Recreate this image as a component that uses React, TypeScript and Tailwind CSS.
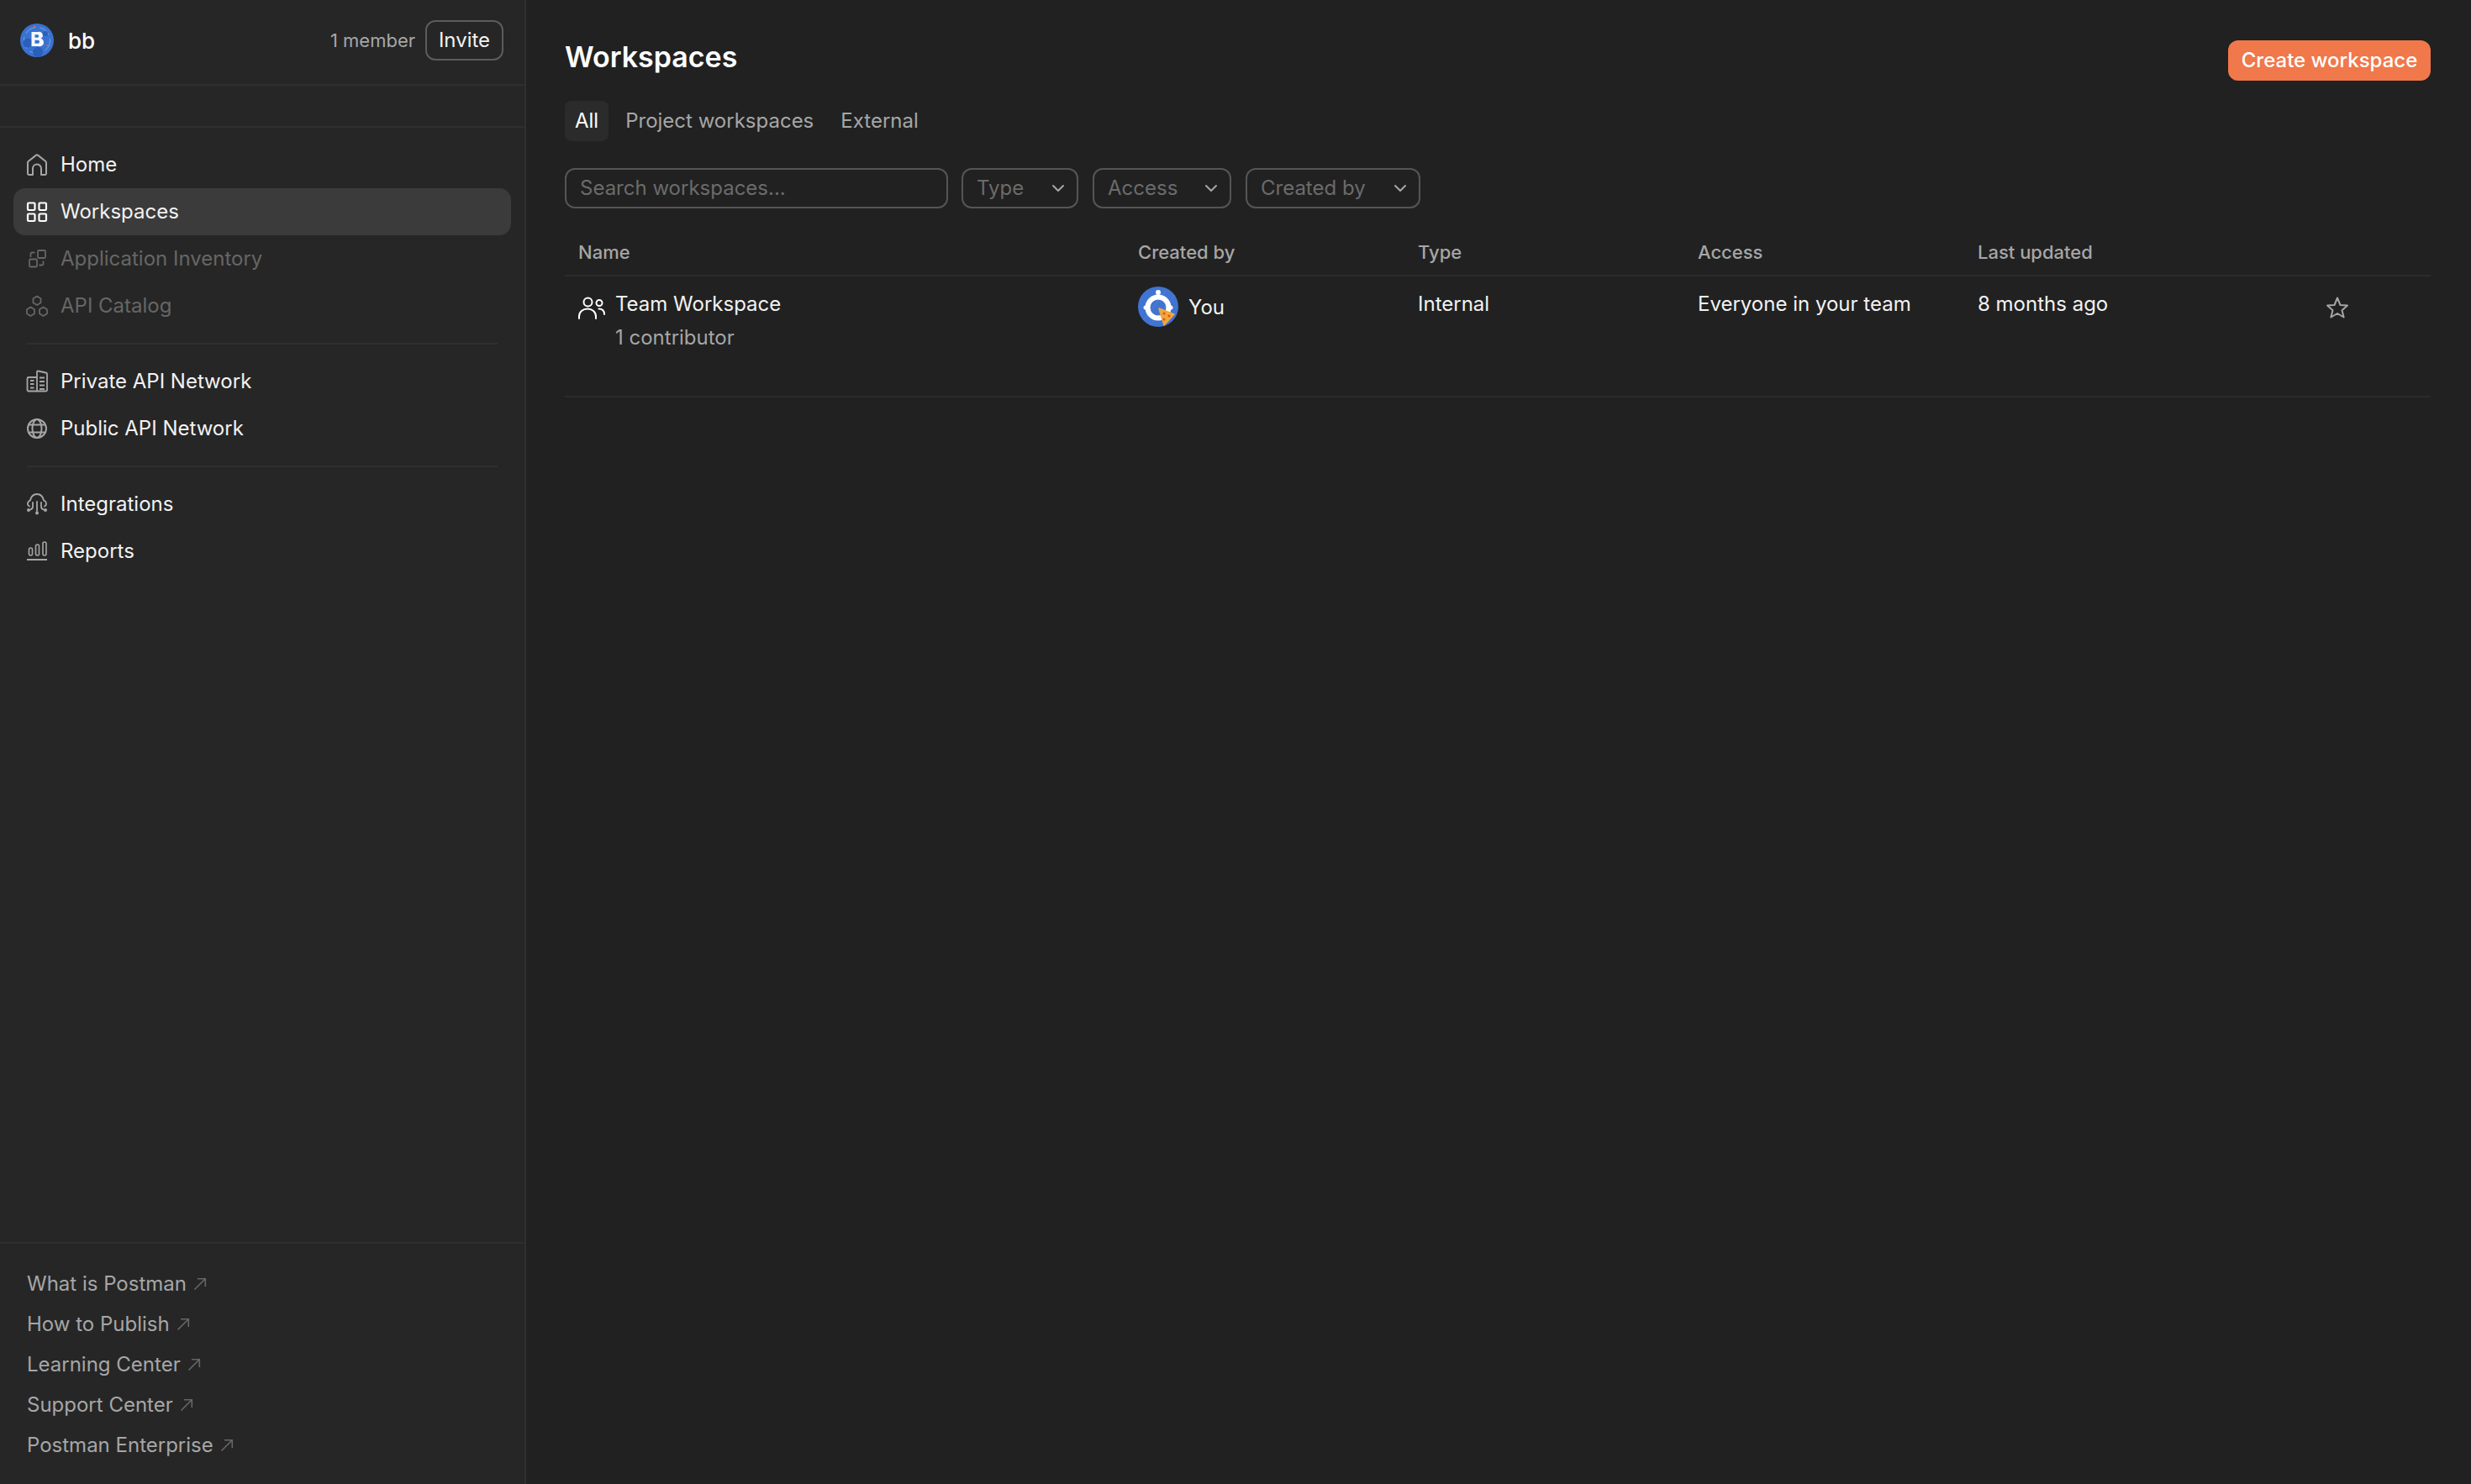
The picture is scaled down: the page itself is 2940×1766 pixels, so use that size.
import { ChevronDown } from 'lucide-react';

const font = { fontFamily: 'Inter, "Liberation Sans", sans-serif' };

const HomeIcon = () => (
  <svg viewBox="0 0 32 32" className="h-8 w-8" fill="none" stroke="currentColor" strokeWidth="2" strokeLinejoin="round">
    <path d="M5 26.5V13.5a2 2 0 0 1 .7-1.5L15 4.6a1.6 1.6 0 0 1 2 0L26.3 12a2 2 0 0 1 .7 1.5v13a1.5 1.5 0 0 1-1.5 1.5H21v-7.5a5 5 0 0 0-10 0V28H6.5A1.5 1.5 0 0 1 5 26.5Z" />
  </svg>
);

const GridIcon = () => (
  <svg viewBox="0 0 32 32" className="h-8 w-8" fill="none" stroke="currentColor" strokeWidth="2.2">
    <rect x="5" y="5.5" width="8.5" height="8.5" rx="1.2" />
    <rect x="18.5" y="5.5" width="8.5" height="8.5" rx="1.2" />
    <rect x="5" y="18.5" width="8.5" height="8.5" rx="1.2" />
    <rect x="18.5" y="18.5" width="8.5" height="8.5" rx="1.2" />
  </svg>
);

const InventoryIcon = () => (
  <svg viewBox="0 0 32 32" className="h-8 w-8" fill="none" stroke="currentColor" strokeWidth="1.8">
    <rect x="17" y="6" width="9" height="9" rx="1.2" />
    <rect x="7" y="16.500" width="9" height="9" rx="1.2" />
    <path d="M8.500 14V10a1.500 1.500 0 0 1 1.500-1.500h3.500" />
    <path d="M23.500 18.500v3.500a1.500 1.500 0 0 1-1.500 1.500h-3.500" />
  </svg>
);

const CatalogIcon = () => (
  <svg viewBox="0 0 32 32" className="h-8 w-8" fill="none" stroke="currentColor" strokeWidth="1.8" strokeLinejoin="round">
    <path d="M16 4.500 20.500 7.200v5.100L16 15 11.500 12.300V7.200Z" />
    <path d="M8.500 17.500 13 20.200v5.100L8.500 28 4 25.300v-5.100Z" />
    <path d="M23.500 17.500 28 20.200v5.100L23.500 28 19 25.300v-5.100Z" />
  </svg>
);

const BuildingIcon = () => (
  <svg viewBox="0 0 32 32" className="h-8 w-8" fill="none" stroke="currentColor" strokeWidth="1.8" strokeLinejoin="round">
    <path d="M16 27.500V4.500a1 1 0 0 1 1.200-1L26.500 5.500a1.800 1.800 0 0 1 1.500 1.800V26a1.500 1.500 0 0 1-1.500 1.500H6A1.500 1.500 0 0 1 4.500 26V12.500A1.500 1.500 0 0 1 6 11H16" />
    <path d="M8 15h4.500M8 19h4.500M8 23.500h4.500M19 11.500h6M19 16h6M19 20.500h6M19 25h6" />
  </svg>
);

const GlobeIcon = () => (
  <svg viewBox="0 0 32 32" className="h-8 w-8" fill="none" stroke="currentColor" strokeWidth="2">
    <circle cx="16" cy="16" r="11" />
    <ellipse cx="16" cy="16" rx="5.500" ry="11" />
    <path d="M6.500 11.500h19M6.500 20.500h19" />
  </svg>
);

const IntegrationsIcon = () => (
  <svg viewBox="0 0 32 32" className="h-8 w-8" fill="none" stroke="currentColor" strokeWidth="1.8" strokeLinecap="round">
    <path d="M7 18.500C4 17 4.500 12.500 8 11.500 9 7 12 4 16 4s7 3 8 7.500c3.500 1 4 5.500 1 7" />
    <path d="M16 13v11M11 14v5c0 2-1.500 3-3 3.500M21 14v5c0 2 1.500 3 3 3.500" />
    <circle cx="6" cy="23" r="2" fill="currentColor" stroke="none" />
    <circle cx="16" cy="26.500" r="2" fill="currentColor" stroke="none" />
    <circle cx="26" cy="23" r="2" fill="currentColor" stroke="none" />
  </svg>
);

const ReportsIcon = () => (
  <svg viewBox="0 0 32 32" className="h-8 w-8" fill="none" stroke="currentColor" strokeWidth="1.6">
    <rect x="6.500" y="12" width="4" height="9" rx="2" />
    <rect x="14.500" y="8" width="4" height="13" rx="2" />
    <rect x="23" y="5" width="4" height="16" rx="2" />
    <path d="M4 26h24" strokeWidth="2" />
  </svg>
);

const TeamAvatar = () => (
  <svg viewBox="0 0 40 40" className="h-10 w-10">
    <circle cx="20" cy="20" r="20" fill="#3a72d0" />
    <circle cx="20" cy="20" r="15.500" fill="none" stroke="#7ea6e8" strokeWidth="1" strokeDasharray="14 5" />
    <circle cx="9" cy="23" r="5.500" fill="#2a5fba" />
    <circle cx="21" cy="34" r="6" fill="#2a5fba" />
    <circle cx="30" cy="12" r="3" fill="#2a5fba" />
    <circle cx="17" cy="3.500" r="1" fill="#e0634a" />
    <circle cx="32" cy="26" r="1" fill="#e0634a" />
    <path d="M13.500 10H21.500A4.200 4.200 0 0 1 24.500 17.800 4.600 4.600 0 0 1 22 27H13.500Z M17.500 13.200V16.800H20.500A1.800 1.800 0 0 0 20.500 13.200Z M17.500 19.800V23.800H21A2 2 0 0 0 21 19.800Z" fill="#f4f7fd" fillRule="evenodd" />
  </svg>
);

const UserAvatar = () => (
  <svg viewBox="0 0 48 48" className="h-12 w-12 shrink-0">
    <circle cx="24" cy="24" r="24" fill="#3f74d2" />
    <path d="M6 40 34 4M14 46 44 10" stroke="#7f78c8" strokeWidth="1" opacity="0.7" />
    <circle cx="24" cy="25" r="12.500" fill="none" stroke="#fff" strokeWidth="6" />
    <circle cx="24" cy="7" r="3" fill="#fff" />
    <path d="M24 7v6" stroke="#fff" strokeWidth="2" />
    <circle cx="9" cy="25" r="2.500" fill="#fff" />
    <circle cx="39" cy="25" r="2.500" fill="#fff" />
    <path d="M25 26 43 33 31 46Z" fill="#f2a63c" stroke="#f2a63c" strokeWidth="1.500" strokeLinejoin="round" />
    <circle cx="31" cy="32" r="1.500" fill="#d9532c" />
    <circle cx="37" cy="35" r="1.500" fill="#d9532c" />
    <circle cx="31" cy="39" r="1.500" fill="#d9532c" />
  </svg>
);

const PeopleIcon = () => (
  <svg viewBox="0 0 32 28" className="h-7 w-8" fill="none" stroke="currentColor" strokeWidth="2" strokeLinecap="round">
    <circle cx="11.500" cy="7.500" r="5" />
    <circle cx="25" cy="8.500" r="3.500" />
    <path d="M1 27v-2.500C1 19 5.500 15.500 11 15.500s10 3.500 10 9V27" />
    <path d="M24.500 15.500c3.500 0 6.500 2 6.500 6.500" />
  </svg>
);

const StarIcon = () => (
  <svg viewBox="0 0 32 32" className="h-8 w-8" fill="none" stroke="currentColor" strokeWidth="2" strokeLinejoin="round">
    <path d="M16 4.500 19.500 13 28 13.600 21.500 19.300 23.600 27.500 16 23 8.400 27.500 10.500 19.300 4 13.600 12.500 13Z" />
  </svg>
);

const ArrowIcon = () => (
  <svg viewBox="0 0 16 16" className="h-4 w-4 shrink-0" fill="none" stroke="currentColor" strokeWidth="1.600">
    <path d="M1.500 14.500 14 2M5 1.800h9.300V11" />
  </svg>
);

const NavRow = ({ icon, label, active, muted }: { icon: React.ReactNode; label: string; active?: boolean; muted?: boolean }) => (
  <div className={`flex h-14 items-center gap-3 rounded-[14px] px-3 ${active ? 'bg-[#3b3b3b]' : ''}`}>
    <span className={active ? 'text-white' : muted ? 'text-[#666666]' : 'text-[#a6a6a6]'}>{icon}</span>
    <span className={`text-[24px] ${muted ? 'text-[#666666]' : 'text-[#f2f2f2]'}`}>{label}</span>
  </div>
);

const Divider = () => <div className="mx-4 my-4 h-0.5 bg-[#2f2f2f]" />;

const footerLinks = ['What is Postman', 'How to Publish', 'Learning Center', 'Support Center', 'Postman Enterprise'];

const FilterButton = ({ label, width }: { label: string; width: string }) => (
  <div className={`flex h-12 items-center justify-between rounded-xl border-2 border-[#555555] pl-4 pr-2.5 text-[24px] text-[#6b6b6b] ${width}`}>
    <span>{label}</span>
    <ChevronDown className="h-6 w-6 text-[#a6a6a6]" strokeWidth={2} />
  </div>
);

const App = () => {
  return (
    <div className="flex h-[1766px] w-[2940px] overflow-hidden bg-[#212121]" style={font}>
      <aside className="flex w-[626px] shrink-0 flex-col border-r-2 border-[#2f2f2f] bg-[#262626]">
        <div className="flex h-[102px] shrink-0 items-center border-b-2 border-[#2f2f2f] pb-1 pl-6 pr-[25px]">
          <TeamAvatar />
          <span className="ml-[17px] text-[26px] font-medium text-white">bb</span>
          <span className="ml-auto text-[22px] text-[#a6a6a6]">1 member</span>
          <button className="ml-3 flex h-12 w-[93px] items-center justify-center rounded-xl border-2 border-[#5c5c5c] text-[24px] text-[#f2f2f2]">
            Invite
          </button>
        </div>
        <div className="h-[50px] shrink-0 border-b-2 border-[#2f2f2f]" />
        <nav className="px-4 pt-4">
          <NavRow icon={<HomeIcon />} label="Home" />
          <NavRow icon={<GridIcon />} label="Workspaces" active />
          <NavRow icon={<InventoryIcon />} label="Application Inventory" muted />
          <NavRow icon={<CatalogIcon />} label="API Catalog" muted />
          <Divider />
          <NavRow icon={<BuildingIcon />} label="Private API Network" />
          <NavRow icon={<GlobeIcon />} label="Public API Network" />
          <Divider />
          <NavRow icon={<IntegrationsIcon />} label="Integrations" />
          <NavRow icon={<ReportsIcon />} label="Reports" />
        </nav>
        <div className="mt-auto border-t-2 border-[#2f2f2f] px-8 pb-[22px] pt-[24px]">
          {footerLinks.map((link) => (
            <div key={link} className="flex h-12 items-center gap-2 text-[24px] text-[#a6a6a6]">
              <span>{link}</span>
              <span className="text-[#666666]">
                <ArrowIcon />
              </span>
            </div>
          ))}
        </div>
      </aside>

      <main className="flex-1 pl-[46px] pr-12 pt-12">
        <div className="flex items-start justify-between">
          <h1 className="text-[34px] font-semibold leading-[40px] text-white">Workspaces</h1>
          <button className="flex h-12 w-[241px] items-center justify-center rounded-xl bg-[#f0784a] text-[24px] font-medium text-white">
            Create workspace
          </button>
        </div>

        <div className="mt-6 flex items-center text-[24px]">
          <div className="flex h-12 items-center rounded-lg bg-[#2b2b2b] px-3 text-white">All</div>
          <div className="ml-5 text-[#a6a6a6]">Project workspaces</div>
          <div className="ml-8 text-[#a6a6a6]">External</div>
        </div>

        <div className="mt-8 flex items-center gap-4">
          <div className="flex h-12 w-[456px] items-center rounded-xl border-2 border-[#555555] pl-4 text-[24px] text-[#6b6b6b]">
            Search workspaces...
          </div>
          <FilterButton label="Type" width="w-[139px]" />
          <FilterButton label="Access" width="w-[165px] ml-px" />
          <FilterButton label="Created by" width="w-[208px] ml-px" />
        </div>

        <div className="mt-8 grid h-[49px] grid-cols-[30%_15%_15%_15%_15%_10%] items-center border-b-2 border-[#2b2b2b] pb-1.5 text-[22px] font-medium text-[#a6a6a6]">
          <div className="px-4">Name</div>
          <div className="px-4">Created by</div>
          <div className="px-4">Type</div>
          <div className="px-4">Access</div>
          <div className="px-4">Last updated</div>
          <div />
        </div>

        <div className="grid h-[144px] grid-cols-[30%_15%_15%_15%_15%_10%] border-b-2 border-[#2b2b2b] text-[24px] text-[#f2f2f2]">
          <div className="flex gap-3 px-4 pt-[17px]">
            <span className="mt-1.5 text-white">
              <PeopleIcon />
            </span>
            <div>
              <div className="leading-8">Team Workspace</div>
              <div className="mt-2 leading-8 text-[#a6a6a6]">1 contributor</div>
            </div>
          </div>
          <div className="flex h-fit items-center gap-3 px-4 pt-3">
            <UserAvatar />
            <span className="pt-0.5">You</span>
          </div>
          <div className="px-4 pt-[17px] leading-8">Internal</div>
          <div className="px-4 pt-[17px] leading-8">Everyone in your team</div>
          <div className="px-4 pt-[17px] leading-8">8 months ago</div>
          <div className="flex justify-center pt-[21px] text-[#a6a6a6]">
            <StarIcon />
          </div>
        </div>
      </main>
    </div>
  );
};

export default App;
